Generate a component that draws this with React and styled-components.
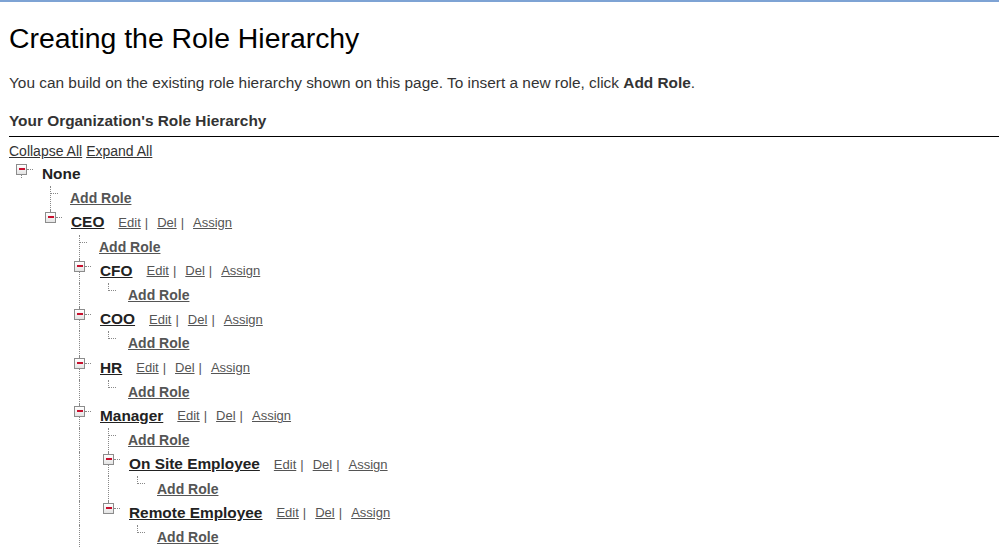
import React from 'react'
import styled, { createGlobalStyle, css } from 'styled-components'

const GlobalStyle = createGlobalStyle`
  html, body {
    margin: 0;
    padding: 0;
    background: #fff;
    overflow: hidden;
  }
  body {
    font-family: Arial, "Liberation Sans", Helvetica, sans-serif;
    color: #333;
  }
`

const TopBar = styled.div`
  height: 2px;
  background: #7ea3d4;
`

const Page = styled.div`
  padding: 0 0 0 9px;
`

const Title = styled.h1`
  margin: 20px 0 0;
  font-size: 28.4px;
  line-height: 32px;
  font-weight: normal;
  color: #000;
`

const Intro = styled.p`
  margin: 20px 0 0;
  font-size: 15.4px;
  line-height: 18px;
  color: #333;
`

const SectionHead = styled.h2`
  margin: 20px 0 0;
  padding-bottom: 6px;
  border-bottom: 1px solid #000;
  font-size: 15.4px;
  line-height: 18px;
  font-weight: bold;
  color: #333;
`

const Toolbar = styled.div`
  margin-top: 6px;
  display: flex;
  gap: 4px;
  font-size: 14px;
  line-height: 16px;
`

const PlainLink = styled.a`
  color: #333;
  text-decoration: underline;
  cursor: pointer;
`

const Tree = styled.div`
  margin-top: 3px;
`

const Row = styled.div`
  display: flex;
  align-items: center;
  height: 24.2px;
  white-space: nowrap;
`

const dotV = css`
  content: '';
  position: absolute;
  left: 12px;
  border-left: 1px dotted #888;
`

const Guide = styled.span`
  position: relative;
  flex: 0 0 29px;
  align-self: stretch;
  ${p => p.$line && css`
    &::before {
      ${dotV};
      top: 0;
      bottom: 0;
    }
  `}
`

const Joint = styled.span`
  position: relative;
  flex: 0 0 ${p => (p.$kind === 'node' ? 33 : 32)}px;
  align-self: stretch;
  &::before {
    ${dotV};
    ${p => (p.$root
      ? css`top: 13px; height: 3px;`
      : p.$last
        ? css`top: 0; height: 8px;`
        : css`top: 0; bottom: 0;`)}
  }
  &::after {
    content: '';
    position: absolute;
    top: 7px;
    border-top: 1px dotted #888;
    ${p => (p.$kind === 'node'
      ? css`left: 18px; width: 6px;`
      : css`left: 12px; width: 8px;`)}
  }
`

const Toggle = styled.span`
  position: absolute;
  left: 7px;
  top: 2px;
  width: 9px;
  height: 9px;
  border: 1px solid #8c8c8c;
  background: linear-gradient(#fff, #e4e4e4);
  z-index: 1;
  &::after {
    content: '';
    position: absolute;
    left: 2px;
    right: 1px;
    top: 3px;
    height: 2px;
    background: #c8102e;
  }
`

const RoleName = styled.a`
  font-size: 15.4px;
  font-weight: bold;
  color: #222;
  text-decoration: ${p => (p.$root ? 'none' : 'underline')};
  cursor: pointer;
`

const AddRole = styled.a`
  font-size: 14px;
  font-weight: bold;
  color: #555;
  text-decoration: underline;
  cursor: pointer;
`

const Actions = styled.span`
  margin-left: 14px;
  font-size: 13px;
  color: #555;
`

const ActionLink = styled.a`
  color: #555;
  text-decoration: underline;
  cursor: pointer;
`

const Sep = styled.span`
  margin: 0 9px 0 4px;
`

// "more" marks a role whose list of sub roles goes on below the visible part
const roles = {
  name: 'None',
  children: [
    {
      name: 'CEO',
      more: true,
      children: [
        { name: 'CFO' },
        { name: 'COO' },
        { name: 'HR' },
        {
          name: 'Manager',
          children: [
            { name: 'On Site Employee' },
            { name: 'Remote Employee' }
          ]
        }
      ]
    }
  ]
}

// flatten the hierarchy into rows, each "Add Role" leaf comes first under its role
const flatten = (node, depth, last, guides, out) => {
  out.push({ kind: 'node', name: node.name, depth, last, guides, root: depth === 0 })
  const kids = node.children || []
  const childGuides = depth === 0 ? [] : [...guides, !last]
  const items = [{ kind: 'add' }, ...kids]
  items.forEach((item, i) => {
    const isLast = i === items.length - 1 && !node.more
    if (item.kind === 'add') {
      out.push({ kind: 'add', depth: depth + 1, last: isLast, guides: childGuides })
    } else {
      flatten(item, depth + 1, isLast, childGuides, out)
    }
  })
  return out
}

const rows = flatten(roles, 0, true, [], [])

const TreeRow = ({ row }) => {
  const indent = row.depth === 0 ? [] : [false, ...row.guides]
  return (
    <Row>
      {indent.map((line, i) => <Guide key={i} $line={line} />)}
      <Joint $kind={row.kind} $last={row.last} $root={row.root}>
        {row.kind === 'node' && <Toggle />}
      </Joint>
      {row.kind === 'add'
        ? <AddRole>Add Role</AddRole>
        : (
          <>
            <RoleName $root={row.root}>{row.name}</RoleName>
            {!row.root && (
              <Actions>
                <ActionLink>Edit</ActionLink><Sep>|</Sep>
                <ActionLink>Del</ActionLink><Sep>|</Sep>
                <ActionLink>Assign</ActionLink>
              </Actions>
            )}
          </>
        )}
    </Row>
  )
}

const App = () => {
  return (
    <>
      <GlobalStyle />
      <TopBar />
      <Page>
        <Title>Creating the Role Hierarchy</Title>
        <Intro>
          You can build on the existing role hierarchy shown on this page. To insert a new role, click <b>Add Role</b>.
        </Intro>
        <SectionHead>Your Organization's Role Hierarchy</SectionHead>
        <Toolbar>
          <PlainLink>Collapse All</PlainLink>
          <PlainLink>Expand All</PlainLink>
        </Toolbar>
        <Tree>
          {rows.map((row, i) => <TreeRow key={i} row={row} />)}
        </Tree>
      </Page>
    </>
  )
}

export default App
